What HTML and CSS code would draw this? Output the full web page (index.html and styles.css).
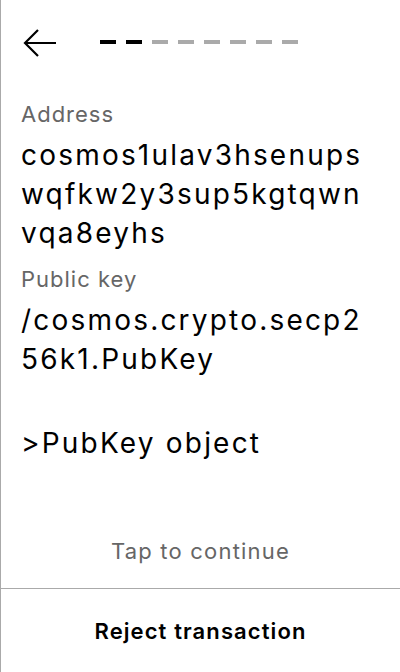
FILE: index.html
```html
<!DOCTYPE html>
<html>
<head>
<meta charset="utf-8">
<link rel="stylesheet" href="styles.css">
</head>
<body>
<div class="screen">
  <header class="top">
    <svg class="back" width="34" height="28" viewBox="0 0 34 28" aria-hidden="true">
      <path d="M33 14 H2 M15 1 L2 14 L15 27" fill="none" stroke="#000" stroke-width="2.2"/>
    </svg>
    <div class="steps">
      <span class="dash on"></span><span class="dash on"></span><span class="dash"></span><span class="dash"></span><span class="dash"></span><span class="dash"></span><span class="dash"></span><span class="dash"></span>
    </div>
  </header>
  <main class="content">
    <div class="label">Address</div>
    <div class="value">cosmos1ulav3hsenups<br>wqfkw2y3sup5kgtqwn<br>vqa8eyhs</div>
    <div class="label label-gap">Public key</div>
    <div class="value">/cosmos.crypto.secp2<br>56k1.PubKey</div>
    <div class="value object">&gt;PubKey object</div>
  </main>
  <div class="tap">Tap to continue</div>
  <button class="reject">Reject transaction</button>
</div>
</body>
</html>
```
FILE: styles.css
```css
html, body {
  margin: 0;
  padding: 0;
  background: #fff;
}
.screen {
  box-sizing: border-box;
  width: 400px;
  height: 672px;
  border-left: 1px solid #aaa;
  display: flex;
  flex-direction: column;
  font-family: Inter, "Noto Sans", sans-serif;
  color: #000;
}
.top {
  display: flex;
  align-items: center;
  padding: 29px 0 0 22px;
  height: 28px;
}
.back {
  display: block;
}
.steps {
  display: flex;
  gap: 10px;
  margin-left: 43px;
  margin-top: -2px;
}
.dash {
  width: 16px;
  height: 4px;
  background: #aaa;
}
.dash.on {
  background: #000;
}
.content {
  flex: 1;
  padding: 43px 10px 0 20px;
}
.label {
  font-size: 22px;
  line-height: 28px;
  letter-spacing: 1px;
  color: #666;
}
.value {
  font-size: 28px;
  line-height: 39px;
  letter-spacing: 2.2px;
  margin-top: 8px;
  white-space: nowrap;
}
.label-gap {
  margin-top: 12px;
}
.object {
  margin-top: 45px;
}
.tap {
  font-size: 22px;
  line-height: 28px;
  letter-spacing: 1.2px;
  color: #666;
  text-align: center;
  padding-bottom: 23px;
}
.reject {
  border: 0;
  border-top: 1px solid #aaa;
  background: #fff;
  height: 84px;
  font-family: Inter, "Noto Sans", sans-serif;
  font-size: 22px;
  font-weight: 600;
  letter-spacing: 1.1px;
  color: #000;
  padding: 0;
  cursor: pointer;
}
```
